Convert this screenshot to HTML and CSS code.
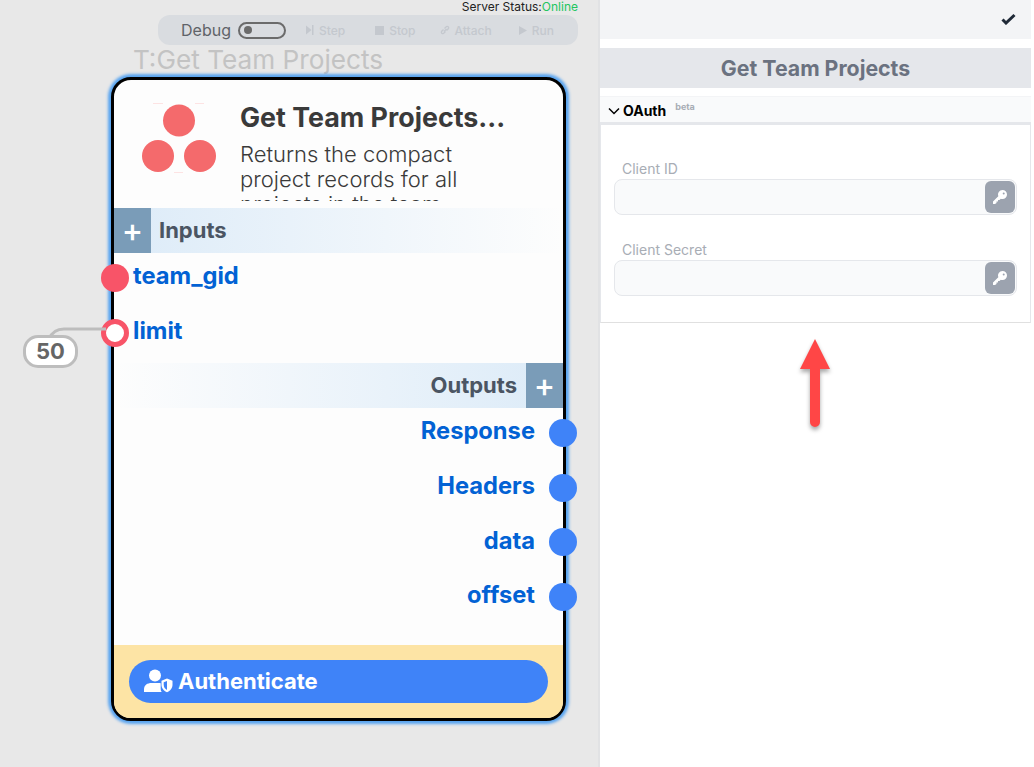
FILE: index.html
```html
<!DOCTYPE html>
<html lang="en">
<head>
    <meta charset="UTF-8">
    <title>Get Team Projects</title>
    <link rel="stylesheet" href="styles.css">
</head>
<body>
    <div class="canvas">
        <div class="status">Server Status:<span class="online">Online</span></div>
        <div class="toolbar">
            <span class="debug-label">Debug</span>
            <span class="toggle"><span class="toggle-dot"></span></span>
            <span class="tool tool-step">
                <svg width="10" height="12" viewBox="0 0 10 12"><path d="M1 1.500 6.500 6 1 10.500zM7 1h1.500v10H7z" fill="#c4c8ce"/></svg>Step
            </span>
            <span class="tool tool-stop">
                <svg width="11" height="11" viewBox="0 0 11 11"><rect x="1" y="1" width="9" height="9" fill="#c4c8ce"/></svg>Stop
            </span>
            <span class="tool tool-attach">
                <svg width="12" height="12" viewBox="0 0 12 12" fill="none" stroke="#c4c8ce" stroke-width="1.300"><path d="M5 7.500 7.500 5M4.500 5.500 2.500 7.500a1.500 1.500 0 0 0 2 2l2-2M5.500 4.500l2-2a1.500 1.500 0 0 1 2 2l-2 2"/></svg>Attach
            </span>
            <span class="tool tool-run">
                <svg width="10" height="11" viewBox="0 0 10 11"><path d="M1 1l8 4.500-8 4.500z" fill="#c4c8ce"/></svg>Run
            </span>
        </div>
        <div class="node-name">T:Get Team Projects</div>

        <div class="node">
            <div class="node-head">
                <svg class="logo" width="76" height="70" viewBox="0 0 76 70">
                    <circle cx="38" cy="17.500" r="16" fill="#f46a6c"/>
                    <circle cx="17" cy="53" r="16" fill="#f46a6c"/>
                    <circle cx="59" cy="53" r="16" fill="#f46a6c"/>
                    <path d="M12 0h10v1H12zM54 0h9v1h-9zM33 69h9v1h-9z" fill="#fde3e3"/>
                </svg>
                <div class="head-text">
                    <div class="head-title">Get Team Projects...</div>
                    <div class="head-desc">Returns the compact project records for all projects in the team.</div>
                </div>
            </div>

            <div class="bar bar-in">
                <span class="plus">+</span>
                <span class="bar-label">Inputs</span>
            </div>
            <div class="pins pins-in">
                <div class="pin-row"><span class="pin pin-red"></span>team_gid</div>
                <div class="pin-row"><span class="pin pin-ring"></span>limit</div>
            </div>

            <div class="bar bar-out">
                <span class="bar-label">Outputs</span>
                <span class="plus">+</span>
            </div>
            <div class="pins pins-out">
                <div class="pin-row">Response<span class="pin pin-blue"></span></div>
                <div class="pin-row">Headers<span class="pin pin-blue"></span></div>
                <div class="pin-row">data<span class="pin pin-blue"></span></div>
                <div class="pin-row">offset<span class="pin pin-blue"></span></div>
            </div>

            <div class="node-foot">
                <div class="auth-btn">
                    <svg width="29" height="24" viewBox="0 0 29 24" fill="#fff">
                        <circle cx="11" cy="6.500" r="6"/>
                        <path d="M0 23v-2.500C0 16 3.500 14 7.500 14h7c.8 0 1.500.1 2.200.3V20c0 1.200.4 2.200 1 3z"/>
                        <path d="M23 9.500l5.500 2.200v4c0 3.500-2.300 6.200-5.500 7.500-3.200-1.300-5.500-4-5.500-7.500v-4z"/>
                        <path d="M23 12v9c-1.900-1-3.300-3-3.300-5.300v-2.400z" fill="#3f83f8"/>
                    </svg>
                    Authenticate
                </div>
            </div>
        </div>

        <svg class="wire" width="60" height="14" viewBox="0 0 60 14" fill="none">
            <path d="M3 13c3-7 8-10 15-10h42" stroke="#bdbdbd" stroke-width="3"/>
        </svg>
        <div class="literal">50</div>
    </div>

    <div class="panel">
        <div class="panel-top">
            <svg width="15" height="12" viewBox="0 0 15 12"><path d="M1.500 6.500 5 10 13.500 2" fill="none" stroke="#1f2937" stroke-width="3"/></svg>
        </div>
        <div class="panel-title">Get Team Projects</div>
        <div class="section-head">
            <svg width="12" height="8" viewBox="0 0 12 8"><path d="M1 1.500 6 6.500l5-5" fill="none" stroke="#000" stroke-width="1.500"/></svg>
            <span class="section-name">OAuth</span>
            <span class="beta">beta</span>
        </div>
        <div class="section-body">
            <div class="field">
                <label class="field-label">Client ID</label>
                <div class="field-input">
                    <span class="key-btn">
                        <svg width="16" height="16" viewBox="0 0 16 16" fill="#fff"><path d="M10.500 1a4.500 4.500 0 0 1 0 9c-.6 0-1.200-.1-1.700-.3L7.500 11H6v1.500H4.500V14L3 15H1v-2.500l5.300-5.300A4.500 4.500 0 0 1 10.500 1zm1.200 2.400a1 1 0 1 0 0 2 1 1 0 0 0 0-2z" fill-rule="evenodd"/></svg>
                    </span>
                </div>
            </div>
            <div class="field">
                <label class="field-label">Client Secret</label>
                <div class="field-input">
                    <span class="key-btn">
                        <svg width="16" height="16" viewBox="0 0 16 16" fill="#fff"><path d="M10.500 1a4.500 4.500 0 0 1 0 9c-.6 0-1.200-.1-1.700-.3L7.500 11H6v1.500H4.500V14L3 15H1v-2.500l5.300-5.300A4.500 4.500 0 0 1 10.500 1zm1.200 2.400a1 1 0 1 0 0 2 1 1 0 0 0 0-2z" fill-rule="evenodd"/></svg>
                    </span>
                </div>
            </div>
        </div>
        <svg class="arrow" width="44" height="100" viewBox="0 0 44 100">
            <path d="M22 2 37 32H27V85a5 5 0 0 1-10 0V32H7z" fill="#ff4646"/>
        </svg>
    </div>
</body>
</html>
```

FILE: styles.css
```css
* {
    box-sizing: border-box;
}

body {
    margin: 0;
    height: 767px;
    display: flex;
    overflow: hidden;
    background-color: #fff;
    font-family: Inter, "Liberation Sans", sans-serif;
}

/* left side, the graph */
.canvas {
    position: relative;
    width: 598px;
    flex-shrink: 0;
    background-color: #e8e8e8;
}

.status {
    height: 15px;
    padding-right: 20px;
    text-align: right;
    font-size: 12px;
    line-height: 14px;
    color: #222;
}

.online {
    color: #22c55e;
}

.toolbar {
    display: flex;
    align-items: center;
    height: 30px;
    width: 420px;
    margin-left: 158px;
    padding-left: 23px;
    background-color: #d9dce0;
    border-radius: 12px;
}

.debug-label {
    font-size: 16px;
    color: #5f6368;
}

.toggle {
    display: flex;
    align-items: center;
    width: 48px;
    height: 17px;
    margin-left: 7px;
    padding-left: 4px;
    border: 2px solid #6b6b6b;
    border-radius: 9px;
}

.toggle-dot {
    width: 8px;
    height: 8px;
    border-radius: 50%;
    background-color: #6b6b6b;
}

.tool {
    display: flex;
    align-items: center;
    gap: 4px;
    font-size: 12px;
    font-weight: 500;
    color: #c4c8ce;
}

.tool-step {
    margin-left: 19px;
}

.tool-stop {
    margin-left: 29px;
}

.tool-attach {
    margin-left: 23px;
}

.tool-run {
    margin-left: 26px;
}

.node-name {
    height: 32px;
    margin-left: 133px;
    font-size: 26.200px;
    line-height: 30px;
    color: #c3c3c3;
}

.node {
    display: flex;
    flex-direction: column;
    position: relative;
    width: 455px;
    height: 644px;
    margin-left: 111px;
    background-color: #fdfdfd;
    border: 3px solid #000;
    border-radius: 20px;
    box-shadow: 0 0 3px 3px #58a4f0;
}

.node-head {
    display: flex;
    height: 128px;
    overflow: hidden;
    border-radius: 16px 16px 0 0;
}

.logo {
    flex-shrink: 0;
    margin: 23px 0 0 27px;
}

.head-text {
    width: 300px;
    margin-left: 23px;
    padding-top: 21px;
}

.head-title {
    font-size: 26.800px;
    font-weight: 700;
    line-height: 32px;
    color: #3a3a3a;
    white-space: nowrap;
}

.head-desc {
    width: 240px;
    height: 59px;
    margin-top: 9px;
    overflow: hidden;
    font-size: 22px;
    font-weight: 300;
    line-height: 25px;
    color: #3a3a3a;
}

.bar {
    display: flex;
    align-items: center;
    flex-shrink: 0;
    height: 45px;
}

.bar-in {
    background: linear-gradient(to right, #dcebf8, #fdfdfd);
}

.bar-out {
    justify-content: flex-end;
    background: linear-gradient(to left, #dcebf8, #fdfdfd);
}

.plus {
    display: flex;
    align-items: center;
    justify-content: center;
    width: 37px;
    height: 45px;
    background-color: #7a9cb8;
    font-size: 32px;
    font-weight: 500;
    color: #fff;
}

.bar-label {
    margin: -2px 9px 0 8px;
    font-size: 22px;
    font-weight: 700;
    color: #4b5563;
}

.pins {
    display: flex;
    flex-direction: column;
}

.pins-in {
    height: 110px;
}

.pins-out {
    height: 237px;
}

.pin-row {
    position: relative;
    height: 54.700px;
    padding: 8px 28px 0 19px;
    font-size: 23.700px;
    font-weight: 700;
    line-height: 30px;
    color: #0262d4;
}

.pins-out .pin-row {
    padding-top: 8.400px;
    text-align: right;
}

.pin {
    position: absolute;
    width: 28px;
    height: 28px;
    border-radius: 50%;
}

.pin-red,
.pin-ring {
    left: -13px;
    top: 11px;
}

.pin-red {
    background-color: #f85468;
}

.pin-ring {
    background-color: #fff;
    border: 5px solid #f85468;
}

.pin-blue {
    right: -14px;
    top: 11px;
    background-color: #3f83f8;
}

.node-foot {
    display: flex;
    flex: 1;
    padding: 15px;
    background-color: #fde4a5;
    border-radius: 0 0 16px 16px;
}

.auth-btn {
    display: flex;
    align-items: center;
    gap: 5px;
    width: 419px;
    height: 43px;
    padding: 0 0 1px 15px;
    background-color: #3f83f8;
    border-radius: 22px;
    font-size: 22px;
    font-weight: 700;
    color: #fff;
}

.literal {
    position: absolute;
    left: 23px;
    top: 335px;
    width: 55px;
    height: 33px;
    background-color: #fff;
    border: 3px solid #bdbdbd;
    border-radius: 15px;
    text-align: center;
    font-size: 22px;
    font-weight: 700;
    line-height: 27px;
    color: #666;
}

.wire {
    position: absolute;
    left: 46px;
    top: 326px;
}

/* right side, the properties panel */
.panel {
    position: relative;
    width: 433px;
    height: 767px;
    flex-shrink: 0;
    border-left: 2px solid #e1e2e4;
}

.panel-top {
    display: flex;
    justify-content: flex-end;
    align-items: center;
    height: 39px;
    padding: 0 15px 1px 0;
    background-color: #f3f4f6;
}

.panel-title {
    height: 40px;
    margin-top: 9px;
    background-color: #e5e7eb;
    text-align: center;
    font-size: 21.300px;
    font-weight: 700;
    line-height: 41px;
    color: #6b7280;
}

.section-head {
    display: flex;
    align-items: center;
    height: 29px;
    margin-top: 8px;
    padding: 2px 0 0 8px;
    background-color: #f9fafb;
    border-top: 1px solid #f3f4f6;
    border-bottom: 3px solid #e5e7eb;
}

.section-name {
    margin-left: 3px;
    font-size: 14px;
    font-weight: 700;
    color: #000;
}

.beta {
    margin: -8px 0 0 9px;
    font-size: 9px;
    font-weight: 700;
    color: #a8adb5;
}

.section-body {
    height: 198px;
    padding: 34px 13px 0 13px;
    background-color: #fff;
    border-left: 1px solid #e5e7eb;
    border-right: 1px solid #e5e7eb;
    border-bottom: 1px solid #e0e0e0;
}

.field {
    margin-bottom: 25px;
}

.field-label {
    display: block;
    height: 20px;
    padding-left: 8px;
    font-size: 14px;
    line-height: 20px;
    color: #a8adb5;
}

.field-input {
    display: flex;
    justify-content: flex-end;
    align-items: center;
    height: 36px;
    padding-right: 1px;
    background-color: #f9fafb;
    border: 1px solid #e5e7eb;
    border-radius: 8px;
}

.key-btn {
    display: flex;
    align-items: center;
    justify-content: center;
    width: 30px;
    height: 32px;
    background-color: #9ca3af;
    border-radius: 6px;
}

.arrow {
    position: absolute;
    left: 193px;
    top: 337px;
    filter: drop-shadow(0 3px 2px rgba(0, 0, 0, 0.35));
}
```
